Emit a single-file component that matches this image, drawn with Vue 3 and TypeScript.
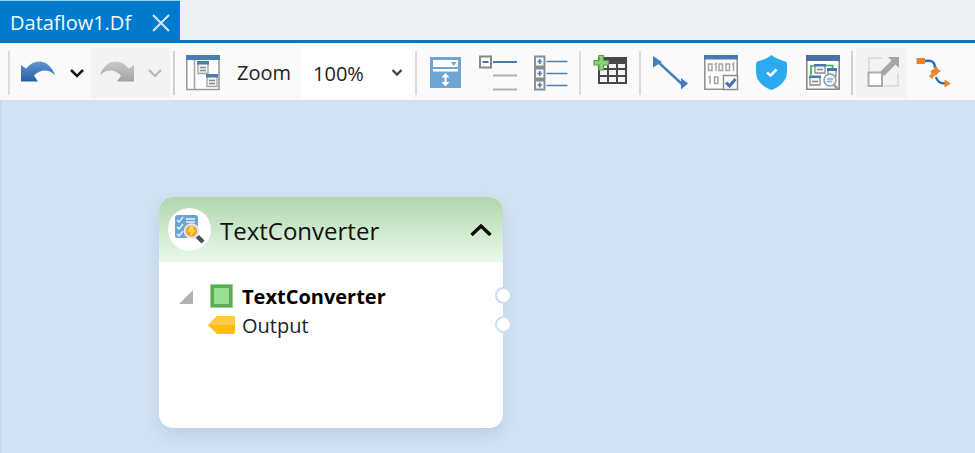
<script setup lang="ts">
import { ref } from 'vue'

interface NodeField {
  name: string
  kind: 'root' | 'output'
}

const zoom = ref<string>('100%')
const zoomLevels: string[] = ['50%', '75%', '100%', '150%', '200%']
const expanded = ref<boolean>(true)
const fields: NodeField[] = [
  { name: 'TextConverter', kind: 'root' },
  { name: 'Output', kind: 'output' },
]
</script>

<template>
  <div class="designer">
    <nav class="tabs" aria-label="Documents">
      <div class="tab">
        <a class="tab-name" href="#dataflow1">Dataflow1.Df</a>
        <button class="tab-close" type="button" aria-label="Close tab">
          <svg width="20" height="20" viewBox="0 0 20 20"><path d="M2 2 18 18M18 2 2 18" fill="none" stroke="#cfeaff" stroke-width="2" /></svg>
        </button>
      </div>
    </nav>

    <div class="toolbar" role="toolbar" aria-label="Dataflow tools">
      <span class="sep thin"></span>
      <div class="split">
        <button class="history" type="button" aria-label="Undo">
          <svg width="36" height="36" viewBox="0 0 36 36">
            <defs><linearGradient id="undo-fill" x1="0" y1="0" x2="0" y2="1"><stop offset="0" stop-color="#6296d0" /><stop offset="1" stop-color="#285fa9" /></linearGradient></defs>
            <path d="M0 10 5 13.500C14 3 28 4 34 20 27 14 20 14 13 20.500L17 26.500H0Z" fill="url(#undo-fill)" />
          </svg>
        </button>
        <button class="drop" type="button" aria-label="Undo history">
          <svg width="16" height="12" viewBox="0 0 16 12"><path d="M1 3 7 9 13 3" fill="none" stroke="#1b1b1b" stroke-width="2.6" /></svg>
        </button>
      </div>
      <div class="split muted">
        <button class="history" type="button" aria-label="Redo">
          <svg width="36" height="36" viewBox="0 0 36 36">
            <defs><linearGradient id="redo-fill" x1="0" y1="0" x2="0" y2="1"><stop offset="0" stop-color="#c9c9c9" /><stop offset="1" stop-color="#a3a3a3" /></linearGradient></defs>
            <path d="M35 10 30 13.500C21 3 7 4 1 20 8 14 15 14 22 20.500L18 26.500H35Z" fill="url(#redo-fill)" />
          </svg>
        </button>
        <button class="drop" type="button" aria-label="Redo history">
          <svg width="16" height="12" viewBox="0 0 16 12"><path d="M1 3 7 9 13 3" fill="none" stroke="#b9b9b9" stroke-width="2.2" /></svg>
        </button>
      </div>
      <span class="sep"></span>
      <button class="tool" type="button" aria-label="Auto layout">
        <svg width="38" height="36" viewBox="0 0 38 36">
          <path d="M1.8 1.5H34V34.500H1.800Z" fill="#fff" stroke="#9a9a9a" stroke-width="1.6" />
          <path d="M9.500 5V34" stroke="#a6a6a6" stroke-width="1.600" />
          <path d="M1 0H35V5H1Z" fill="#4a7db6" />
          <path d="M13 7H23V18.500H13ZM22 20H32V31.500H22Z" fill="#f1f1f1" stroke="#a3a3a3" stroke-width="1.300" />
          <path d="M12 6H24V9.500H12ZM21 19H33V22.500H21Z" fill="#4a7db6" />
          <path d="M15 12.500H21M15 15.500H21M24 25.500H30M24 28.500H30" stroke="#8c8c8c" stroke-width="1.500" />
        </svg>
      </button>
      <label class="zoom-label" for="zoom">Zoom</label>
      <div class="zoom-box">
        <select id="zoom" v-model="zoom">
          <option v-for="level in zoomLevels" :key="level">{{ level }}</option>
        </select>
        <svg class="zoom-arrow" width="12" height="10" viewBox="0 0 12 10"><path d="M1.500 2 6 6.500 10.500 2" fill="none" stroke="#444" stroke-width="2.300" /></svg>
      </div>
      <span class="sep thin"></span>
      <button class="tool wide" type="button" aria-label="Expand node">
        <svg width="36" height="36" viewBox="0 0 36 36">
          <path d="M2 2H33V33H2Z" fill="#6fa5d5" />
          <path d="M5 5H30V12H5ZM5 14H30V16.500H5Z" fill="#fff" />
          <path d="M23 7H28.500L25.700 11Z" fill="#6fa5d5" />
          <path d="M17.500 18 21.500 22.500H18.500V27H21.500L17.500 31.500 13.500 27H16.500V22.500H13.500Z" fill="#fff" />
        </svg>
      </button>
      <button class="tool wide" type="button" aria-label="Collapse tree">
        <svg width="40" height="36" viewBox="0 0 40 36">
          <path d="M2 1.500H13V12.500H2Z" fill="#fff" stroke="#898989" stroke-width="2" />
          <path d="M4.500 7H10.500M15 7H39" stroke="#4a76ad" stroke-width="1.800" />
          <path d="M15 20.500H39M15 34.500H39" stroke="#adb1ad" stroke-width="1.800" />
        </svg>
      </button>
      <button class="tool wide" type="button" aria-label="Expand tree">
        <svg width="36" height="36" viewBox="0 0 36 36">
          <path d="M3 1.500H12.500V11.500H3ZM3 13.500H12.500V23.500H3ZM3 25.500H12.500V34.500H3Z" fill="#f7f7f7" stroke="#8c8c8c" stroke-width="1.900" />
          <path d="M5.500 6.500H10M7.750 4V9M5.500 18.500H10M7.750 16V21M5.500 30H10M7.750 27.500V32.500M14.500 6.500H35.500M14.500 18.500H35.500M14.500 30.500H35.500" stroke="#547fb4" stroke-width="1.700" />
        </svg>
      </button>
      <span class="sep thin"></span>
      <button class="tool wide" type="button" aria-label="Add table">
        <svg width="36" height="36" viewBox="0 0 36 36">
          <path d="M6 2H35V29H6Z" fill="#484848" />
          <path d="M8 9H15V13H8ZM17 9H24V13H17ZM26 9H33V13H26ZM8 15H15V20H8ZM17 15H24V20H17ZM26 15H33V20H26ZM8 22H15V27H8ZM17 22H24V27H17ZM26 22H33V27H26Z" fill="#f5f5f5" />
          <path d="M7 .5H11.500V5.500H16.500V10H11.500V15H7V10H2V5.500H7Z" fill="#8bd17a" stroke="#56a046" stroke-width="1.200" />
        </svg>
      </button>
      <span class="sep thin"></span>
      <button class="tool" type="button" aria-label="Link">
        <svg width="36" height="36" viewBox="0 0 36 36">
          <path d="M5 6 31 30" stroke="#477db8" stroke-width="2.400" />
          <path d="M1 1 10 7 1 12.500ZM36 28.500 29 23V34.500Z" fill="#477db8" />
        </svg>
      </button>
      <button class="tool" type="button" aria-label="Validate data">
        <svg width="36" height="36" viewBox="0 0 36 36">
          <path d="M1.800 1.500H34.200V34.200H1.800Z" fill="#fff" stroke="#929292" stroke-width="1.600" />
          <path d="M1 0H35V4.500H1Z" fill="#4a78b0" />
          <g fill="none" stroke="#a4a4a4" stroke-width="1.500">
            <path d="M5.500 9H9V15.500H5.500ZM11.500 9.500 13 8.500V16.200M16 9H19.500V15.500H16ZM23 9H26.500V15.500H23ZM29 9.500 30.500 8.500V16.200M5.500 22.500 7 21.500V29.200M11.500 22H15V28.500H11.500Z" />
          </g>
          <path d="M20.500 20.500H34.500V34.500H20.500Z" fill="#fff" stroke="#8c8c8c" stroke-width="1.500" />
          <path d="M23 27.500 26.500 31 32.500 24" fill="none" stroke="#4274b3" stroke-width="3" />
        </svg>
      </button>
      <button class="tool" type="button" aria-label="Verify">
        <svg width="36" height="36" viewBox="0 0 36 36">
          <path d="M17.500 0C20.500 3 26.500 5 31.500 6.500Q33 7 33 9V17C33 26 25.500 32 17.500 35 9.500 32 2 26 2 17V9Q2 7 3.500 6.500C8.500 5 14.500 3 17.500 0Z" fill="#2caaf0" />
          <path d="M13 17.500 16.500 20.500 22.500 14.500" fill="none" stroke="#fff" stroke-width="2.600" />
        </svg>
      </button>
      <button class="tool" type="button" aria-label="Preview dataflow">
        <svg width="36" height="36" viewBox="0 0 36 36">
          <path d="M1.800 1.500H34.200V34.200H1.800Z" fill="#fff" stroke="#858585" stroke-width="1.600" />
          <path d="M1 0H35V6H1Z" fill="#4a70a5" />
          <path d="M6 20V11H10M20 10.500H27.500V14" fill="none" stroke="#3fae49" stroke-width="1.700" />
          <path d="M10 10H20V18H10ZM5 22H15V30H5ZM23 14H31V21H23Z" fill="#f3f3f3" stroke="#8c8c8c" stroke-width="1.300" />
          <path d="M9 9H21V11.500H9ZM4 20.500H16V23H4ZM22 13H32V16H22Z" fill="#4876ae" />
          <path d="M12 14.500H18M7 26.500H13" stroke="#8c8c8c" stroke-width="1.500" />
          <path d="M28.500 29.500 33 34" stroke="#9b9b9b" stroke-width="2.500" />
          <circle cx="25" cy="25" r="6" fill="#e8f3fc" stroke="#999" stroke-width="1.500" />
          <path d="M22 24H28M22 26.500H27" stroke="#83afd8" stroke-width="1.500" />
        </svg>
      </button>
      <span class="sep"></span>
      <button class="tool muted" type="button" aria-label="Resize">
        <svg width="36" height="36" viewBox="0 0 36 36">
          <path d="M5 16V3H18M34 18V31H20" fill="none" stroke="#dfdfdf" stroke-width="2" />
          <path d="M4.500 17.500H18V31H4.500Z" fill="#fff" stroke="#adadad" stroke-width="2" />
          <path d="M24 2H35V13L31.500 9.500 20 21 16 17 27.500 5.500Z" fill="#a6a6a6" />
        </svg>
      </button>
      <button class="tool" type="button" aria-label="Route links">
        <svg width="36" height="36" viewBox="0 0 36 36">
          <path d="M10 6C17 5 20 7 20 13M21 22C22 26 24 28.500 30 28.500" fill="none" stroke="#286eb4" stroke-width="2.400" />
          <path d="M1.500 3H10V9H1.500ZM29.500 24.500 36 28.500 29.500 32.500ZM21 10.500 23 14 26 16 23 18 21 21 18.500 19.500 16 18 15.500 16 19 14ZM16.500 18.500 19.500 20.500 17 24 14 21Z" fill="#e98529" />
        </svg>
      </button>
    </div>

    <main class="canvas">
      <section class="node">
        <header class="node-head">
          <span class="node-icon">
            <svg width="32" height="32" viewBox="0 0 32 32">
              <rect x="1" y="1" width="23" height="23" rx="2.500" fill="#6da4d5" />
              <path d="M3 6 5 8 9 3M3 13 5 15 9 10M3 20 5 22 9 17M12 5H21M12 8H21" fill="none" stroke="#e6f3ff" stroke-width="1.500" />
              <path d="M23.500 22.500 29 28" stroke="#505050" stroke-width="4.400" />
              <circle cx="17.500" cy="17" r="6.800" fill="#f5a51d" stroke="#e1e7ea" stroke-width="2" />
              <path d="M16 12H20L19 16H22L16 23 17 18H14Z" fill="#ffd653" />
            </svg>
          </span>
          <h1 class="node-title">TextConverter</h1>
          <button class="collapse" type="button" aria-label="Toggle node" :aria-expanded="expanded" @click="expanded = !expanded">
            <svg width="24" height="18" viewBox="0 0 24 18"><path d="M2.500 14 12 5 21.500 14" fill="none" stroke="#0b0b0b" stroke-width="3.400" /></svg>
          </button>
        </header>
        <ul v-if="expanded" class="fields">
          <li v-for="field in fields" :key="field.name" class="field" :class="field.kind">
            <button v-if="field.kind === 'root'" class="twisty" type="button" aria-label="Toggle fields">
              <svg width="14" height="14" viewBox="0 0 14 14"><path d="M14 0V14H0Z" fill="#b1b1b1" /></svg>
            </button>
            <span v-else class="twisty"></span>
            <svg v-if="field.kind === 'root'" width="28" height="26" viewBox="0 0 28 26">
              <rect x="2" y="0" width="23" height="24" fill="#92d88c" />
              <rect x="4.500" y="2.500" width="18" height="19" fill="#98e08f" stroke="#5aac54" stroke-width="3" />
            </svg>
            <svg v-else width="28" height="20" viewBox="0 0 28 20">
              <path d="M0 9 9 0H25Q27 0 27 2V16Q27 18 25 18H9Z" fill="#fdbe0d" />
              <path d="M0 9 9 0H25Q27 0 27 2V9Z" fill="#ffcb45" />
            </svg>
            <span class="field-name">{{ field.name }}</span>
            <span class="port"></span>
          </li>
        </ul>
      </section>
    </main>
  </div>
</template>

<style>
body {
  margin: 0;
}
</style>

<style scoped>
.designer {
  display: flex;
  flex-direction: column;
  min-height: 100vh;
  font-family: "Open Sans", "Noto Sans", sans-serif;
  font-size: 20px;
  color: #222;
  background: #d3e2f2;
}
button {
  display: flex;
  align-items: center;
  justify-content: center;
  padding: 0;
  border: 0;
  background: none;
  cursor: pointer;
}
svg {
  display: block;
  flex: none;
}
.tabs {
  display: flex;
  height: 40px;
  border-bottom: 3px solid #0877c3;
  background: #eeeff1;
}
.tab {
  display: flex;
  align-items: center;
  gap: 20px;
  padding: 4px 9px 0 10px;
  border-top: 1px solid #9bd0ef;
  background: #007acd;
}
.tab-name {
  color: #f2faff;
  text-decoration: none;
}
.toolbar {
  display: flex;
  align-items: center;
  height: 54px;
  padding: 2px 0 0 5px;
  border-top: 1px solid #e5f1f8;
  background: #fafafa;
}
.sep {
  flex: none;
  width: 2px;
  height: 44px;
  margin: 0 3px;
  background: #cfd0d3;
}
.sep.thin {
  background: #dcdcde;
}
.split {
  display: flex;
  height: 50px;
}
.split.muted {
  padding-right: 1px;
}
.muted {
  background: #f3f3f3;
}
.history {
  width: 52px;
}
.drop {
  width: 26px;
}
.tool {
  flex: none;
  width: 51px;
  height: 50px;
}
.tool.wide {
  width: 52px;
}
.zoom-label {
  padding: 0 10px 2px 8px;
}
.zoom-box {
  display: grid;
  align-items: center;
  width: 111px;
  height: 52px;
  background: #fff;
}
.zoom-box > * {
  grid-area: 1 / 1;
}
.zoom-box select {
  width: 100%;
  height: 100%;
  padding: 0 20px 0 12px;
  border: 0;
  appearance: none;
  background: none;
  color: #222;
  font: inherit;
}
.zoom-arrow {
  justify-self: end;
  margin-right: 9px;
  pointer-events: none;
}
.canvas {
  position: relative;
  flex: 1;
  border-left: 1px solid #c5d7e9;
}
.node {
  position: absolute;
  top: 97px;
  left: 158px;
  box-sizing: border-box;
  width: 344px;
  min-height: 231px;
  border-radius: 14px;
  background: #fff;
  box-shadow: 0 7px 16px rgba(90, 135, 180, 0.2);
}
.node-head {
  display: flex;
  align-items: center;
  height: 65px;
  padding: 0 10px 0 9px;
  border-radius: 14px 14px 0 0;
  background: linear-gradient(#b1d7b0, #e9f9e8);
}
.node-icon {
  display: flex;
  align-items: center;
  justify-content: center;
  width: 43px;
  height: 43px;
  border-radius: 50%;
  background: #fff;
}
.node-title {
  flex: 1;
  margin: 0;
  padding: 3px 0 0 9px;
  color: #111;
  font-size: 24px;
  font-weight: 500;
  line-height: 32px;
}
.fields {
  margin: 0;
  padding: 20px 0 0 20px;
  list-style: none;
}
.field {
  position: relative;
  display: flex;
  align-items: center;
  height: 29px;
  color: #222;
}
.twisty {
  width: 14px;
  margin-right: 15px;
}
.field-name {
  margin-left: 6px;
}
.root .field-name {
  color: #000;
  font-weight: 700;
}
.port {
  position: absolute;
  top: 5px;
  right: -9px;
  box-sizing: border-box;
  width: 17px;
  height: 17px;
  border: 2px solid #cfdded;
  border-radius: 50%;
  background: #fff;
}
</style>
